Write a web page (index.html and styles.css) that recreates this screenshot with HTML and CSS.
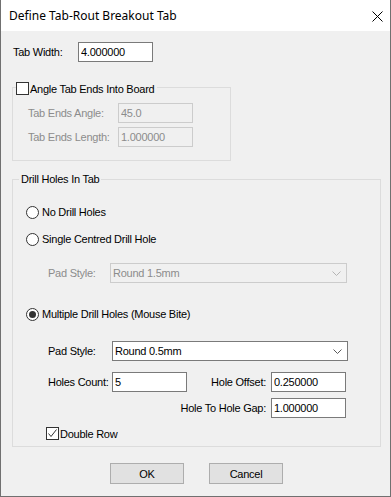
FILE: index.html
```html
<!DOCTYPE html>
<html lang="en">
<head>
    <meta charset="UTF-8">
    <meta name="viewport" content="width=device-width, initial-scale=1.0">
    <title>Define Tab-Rout Breakout Tab</title>
    <link rel="stylesheet" href="styles.css">
</head>
<body>

<div class="window">
    <div class="titlebar">
        <span class="title">Define Tab-Rout Breakout Tab</span>
        <svg class="close" width="11" height="11" viewBox="0 0 11 11">
            <path d="M0.5 0.5L10.5 10.5M10.5 0.5L0.5 10.5" stroke="#000" stroke-width="1" fill="none"/>
        </svg>
    </div>

    <div class="content">
        <div class="tab-width">
            <label class="lbl" for="tabWidth">Tab Width:</label>
            <input class="field" type="text" id="tabWidth" value="4.000000">
        </div>

        <div class="group angle">
            <div class="legend check-legend">
                <span class="checkbox"></span>
                <span>Angle Tab Ends Into Board</span>
            </div>
            <div class="sub first">
                <label class="lbl disabled">Tab Ends Angle:</label>
                <input class="field" type="text" value="45.0" disabled>
            </div>
            <div class="sub">
                <label class="lbl disabled">Tab Ends Length:</label>
                <input class="field" type="text" value="1.000000" disabled>
            </div>
        </div>

        <div class="group drill">
            <div class="legend text-legend">Drill Holes In Tab</div>

            <div class="opt opt-none"><span class="radio"></span>No Drill Holes</div>
            <div class="opt opt-single"><span class="radio"></span>Single Centred Drill Hole</div>

            <div class="pad pad-single">
                <label class="lbl disabled">Pad Style:</label>
                <div class="combo disabled">
                    <span>Round 1.5mm</span>
                    <svg width="9" height="5" viewBox="0 0 9 5"><path d="M0.5 0.5L4.5 4.5L8.5 0.5" stroke="#b4b4b4" fill="none"/></svg>
                </div>
            </div>

            <div class="opt opt-multi"><span class="radio on"></span>Multiple Drill Holes (Mouse Bite)</div>

            <div class="pad pad-multi">
                <label class="lbl">Pad Style:</label>
                <div class="combo">
                    <span>Round 0.5mm</span>
                    <svg width="9" height="5" viewBox="0 0 9 5"><path d="M0.5 0.5L4.5 4.5L8.5 0.5" stroke="#5a5a5a" fill="none"/></svg>
                </div>
            </div>

            <div class="holes">
                <label class="lbl">Holes Count:</label>
                <input class="field" type="text" value="5">
                <label class="lbl right">Hole Offset:</label>
                <input class="field" type="text" value="0.250000">
                <label class="lbl right span3">Hole To Hole Gap:</label>
                <input class="field" type="text" value="1.000000">
            </div>

            <div class="double-row">
                <span class="checkbox on">
                    <svg width="11" height="11" viewBox="0 0 11 11"><path d="M1.5 5.5L4 8.5L9.5 1.5" stroke="#333" fill="none"/></svg>
                </span>
                <span>Double Row</span>
            </div>
        </div>

        <div class="buttons">
            <button type="button">OK</button>
            <button type="button">Cancel</button>
        </div>
    </div>
</div>

</body>
</html>
```

FILE: styles.css
```css
body {
    margin: 0;
    font-family: 'Liberation Sans', Arial, sans-serif;
    font-size: 11px;
    letter-spacing: -0.25px;
    color: #000;
}

.window {
    width: 391px;
    height: 497px;
    box-sizing: border-box;
    border: 1px solid #707070;
    border-top: none;
    background-color: #f0f0f0;
}

.titlebar {
    height: 31px;
    background-color: #fff;
    display: flex;
    align-items: center;
    padding: 0 7px 0 8px;
    letter-spacing: 0;
}

.title {
    font-family: 'Noto Sans', sans-serif;
    font-size: 12px;
    flex: 1;
}

.close {
    margin-top: 1px;
}

.content {
    padding: 0 9px 0 11px;
}

.lbl {
    display: block;
    white-space: nowrap;
}

.lbl.disabled {
    color: #8c8c8c;
}

.field {
    box-sizing: border-box;
    width: 75px;
    height: 20px;
    margin: 0;
    padding: 0 2px;
    border: 1px solid #7a7a7a;
    background-color: #fff;
    font-family: inherit;
    font-size: 11px;
    letter-spacing: inherit;
    color: #000;
    outline: none;
}

.field:disabled {
    border-color: #cccccc;
    background-color: #f0f0f0;
    color: #8c8c8c;
}

.tab-width {
    display: flex;
    align-items: center;
    margin-top: 11px;
    height: 20px;
}

.tab-width .lbl {
    width: 66px;
    padding-left: 1px;
    box-sizing: border-box;
}

/* group boxes */
.group {
    box-sizing: border-box;
    border: 1px solid #dcdcdc;
}

.legend {
    width: max-content;
    height: 13px;
    background-color: #f0f0f0;
}

.check-legend {
    display: flex;
    align-items: center;
    gap: 1px;
    margin: -6px 0 0 3px;
    padding-right: 3px;
}

.text-legend {
    line-height: 13px;
    margin: -7px 0 0 6px;
    padding: 0 2px;
}

.checkbox {
    box-sizing: border-box;
    display: inline-flex;
    align-items: center;
    justify-content: center;
    width: 13px;
    height: 13px;
    border: 1px solid #333;
    background-color: #fff;
}

.radio {
    box-sizing: border-box;
    display: inline-flex;
    align-items: center;
    justify-content: center;
    width: 13px;
    height: 13px;
    border: 1px solid #333;
    border-radius: 50%;
    background-color: #fff;
}

.radio.on::after {
    content: "";
    width: 7px;
    height: 7px;
    border-radius: 50%;
    background-color: #333;
}

.angle {
    width: 219px;
    margin-top: 25px;
    padding-bottom: 13px;
}

.sub {
    display: flex;
    align-items: center;
    height: 20px;
    padding-left: 15px;
    margin-top: 4px;
}

.sub.first {
    margin-top: 8px;
}

.sub .lbl {
    width: 90px;
}

.drill {
    margin-top: 18px;
    padding-bottom: 6px;
}

.opt {
    display: flex;
    align-items: center;
    gap: 3px;
    height: 14px;
    padding-left: 13px;
}

.opt-none {
    margin-top: 19px;
}

.opt-single {
    margin-top: 13px;
}

.opt-multi {
    margin-top: 24px;
}

.pad {
    display: flex;
    align-items: center;
    height: 20px;
    padding-left: 35px;
}

.pad-single {
    margin-top: 17px;
}

.pad-single .lbl {
    width: 62px;
}

.pad-single .combo {
    width: 237px;
}

.pad-multi {
    margin-top: 20px;
}

.pad-multi .lbl {
    width: 64px;
}

.pad-multi .combo {
    width: 236px;
}

.combo {
    box-sizing: border-box;
    display: flex;
    align-items: center;
    height: 20px;
    padding: 0 5px 0 2px;
    border: 1px solid #7a7a7a;
    background-color: #fff;
}

.combo svg {
    margin-left: auto;
}

.combo.disabled {
    border-color: #cccccc;
    background-color: #f0f0f0;
    color: #8c8c8c;
}

.holes {
    display: grid;
    grid-template-columns: 64px 75px 84px 75px;
    grid-auto-rows: 20px;
    row-gap: 6px;
    align-items: center;
    margin-top: 11px;
    padding-left: 35px;
}

.lbl.right {
    justify-self: end;
    padding-right: 5px;
}

.lbl.span3 {
    grid-column: 1 / 4;
}

.double-row {
    display: flex;
    align-items: center;
    gap: 1px;
    height: 13px;
    margin-top: 9px;
    padding-left: 33px;
}

.buttons {
    display: flex;
    justify-content: center;
    gap: 25px;
    margin-top: 16px;
}

.buttons button {
    box-sizing: border-box;
    width: 74px;
    height: 21px;
    margin: 0;
    padding: 0;
    border: 1px solid #adadad;
    background-color: #e1e1e1;
    font-family: inherit;
    font-size: 11px;
    letter-spacing: inherit;
    color: #000;
}
```
